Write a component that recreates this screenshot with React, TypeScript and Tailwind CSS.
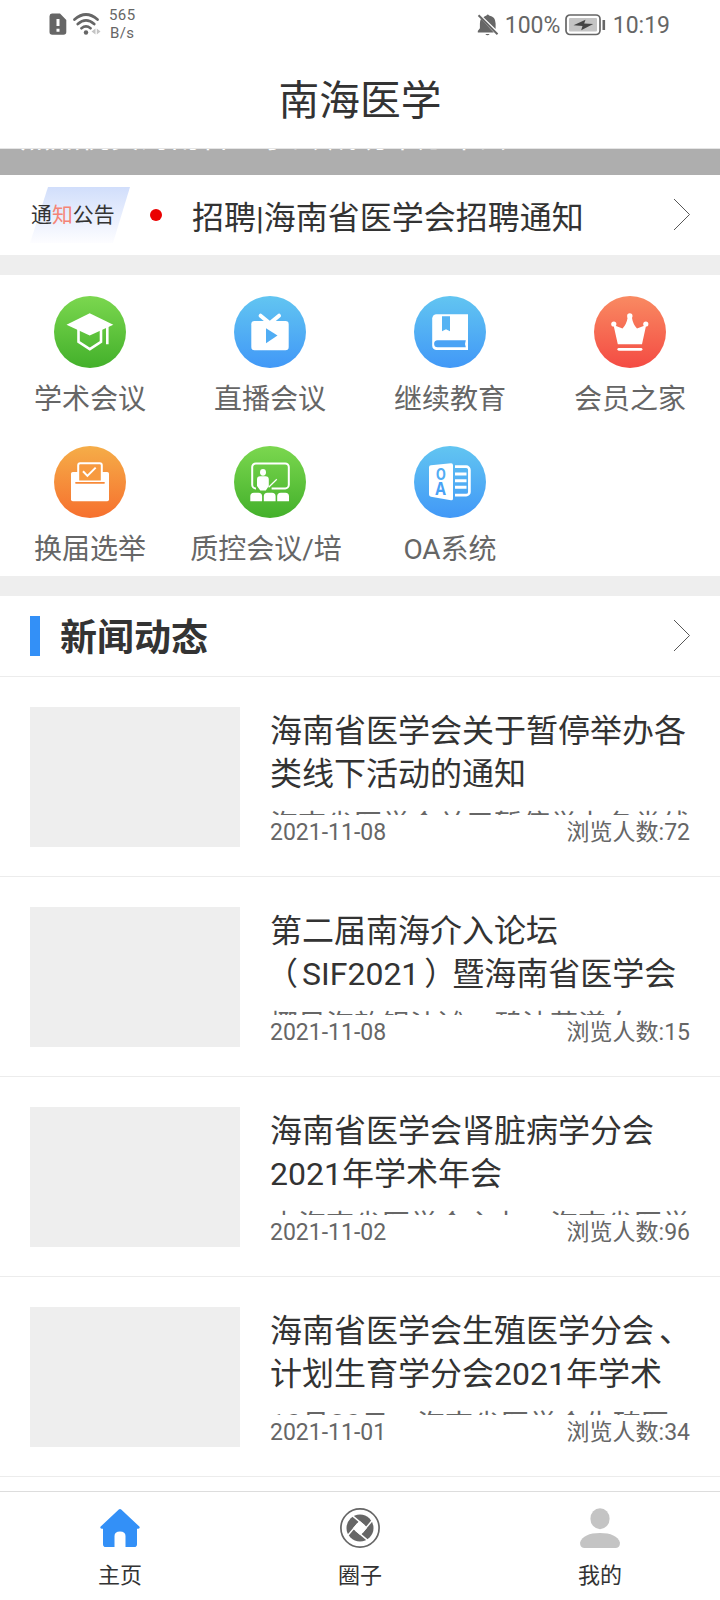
import type { ReactNode } from "react";

const Chevron = () => (
  <svg className="h-8 w-[18px]" viewBox="0 0 18 32" fill="none" stroke="#444" strokeWidth="0.9">
    <path d="M1 0 16.500 15.500 1 31" />
  </svg>
);

const gradients: Record<string, [string, string]> = {
  green: ["#7bd74f", "#43b02b"],
  blue: ["#62c5f1", "#4198f7"],
  red: ["#f98a62", "#f44b43"],
  orange: ["#f5ad48", "#f6702e"],
};

function Badge({ id, tone, children }: { id: string; tone: string; children: ReactNode }) {
  const [from, to] = gradients[tone];
  return (
    <svg className="h-[72px] w-[72px]" viewBox="0 0 72 72" fill="none">
      <defs>
        <linearGradient id={id} x1="0" y1="0" x2="0" y2="1">
          <stop stopColor={from} />
          <stop offset="1" stopColor={to} />
        </linearGradient>
      </defs>
      <circle cx="36" cy="36" r="36" fill={`url(#${id})`} />
      {children}
    </svg>
  );
}

const menu = [
  {
    label: "学术会议",
    tone: "green",
    art: (
      <>
        <path d="M12.5 28.7 35.7 17.3 59.3 28.7 35.7 39.5Z" fill="#fff" />
        <path d="M24.5 33v12.9l11.3 7.2 11.2-7.2V33M53.3 30v18.3" stroke="#fff" strokeWidth="2.6" />
      </>
    ),
  },
  {
    label: "直播会议",
    tone: "blue",
    art: (
      <>
        <rect x="17.3" y="25" width="37.4" height="29.2" rx="3.2" fill="#fff" />
        <path d="m26.6 19.7 9.2 7.6 9.2-7.6" stroke="#fff" strokeWidth="4" strokeLinecap="round" />
        <path d="M32 32.3v15l11.5-7.8Z" fill="#50adf4" />
      </>
    ),
  },
  {
    label: "继续教育",
    tone: "blue",
    art: (
      <>
        <path d="M22.5 18.3H54V54H22.5a4.3 4.3 0 0 1-4.3-4.3V22.6a4.3 4.3 0 0 1 4.3-4.3Z" fill="#fff" />
        <path d="M28 20.3h8v15l-4-2-4 2Z" fill="#56b3f3" />
        <path d="M23.6 44.3h28.2q-1.5 3.6 0 7H23.6a3.5 3.5 0 0 1 0-7Z" fill="#4aa3f5" />
      </>
    ),
  },
  {
    label: "会员之家",
    tone: "red",
    art: (
      <>
        <path d="m19.500 29 4.300 19.200H48L52.200 29 43 32.500q-4-4-5.200-11.500h-4q-1.300 7.500-5.300 11.500Z" fill="#fff" />
        <circle cx="19.8" cy="28" r="2.6" fill="#fff" />
        <circle cx="35.8" cy="20" r="2.7" fill="#fff" />
        <circle cx="51.8" cy="28" r="2.6" fill="#fff" />
        <path d="M24.8 53.3H47" stroke="#fff" strokeWidth="2.8" strokeLinecap="round" />
      </>
    ),
  },
  {
    label: "换届选举",
    tone: "orange",
    art: (
      <>
        <rect x="17" y="26" width="38" height="29.3" rx="1.8" fill="#fff" />
        <path d="M24.2 35.5V19.2a2 2 0 0 1 2-2h19.6a2 2 0 0 1 2 2v16.3Z" fill="#f79a40" stroke="#fff" strokeWidth="2" />
        <path d="M22 36.8h28" stroke="#f88a38" strokeWidth="1.8" strokeLinecap="round" />
        <path d="m29 25.3 4.4 4.6 8.3-8.3" stroke="#fff" strokeWidth="2" />
      </>
    ),
  },
  {
    label: "质控会议/培",
    tone: "green",
    art: (
      <>
        <path
          d="M22 42.4h-.2a3.6 3.6 0 0 1-3.6-3.6V21a3.6 3.6 0 0 1 3.6-3.6h29.4a3.6 3.6 0 0 1 3.6 3.6v17.8a3.6 3.6 0 0 1-3.6 3.6H37.6"
          stroke="#fff"
          strokeWidth="2"
        />
        <ellipse cx="29" cy="26.3" rx="3" ry="3.4" fill="#fff" />
        <path d="M26.5 30.2h5a3.3 3.3 0 0 1 3.3 3.3V40l-3 4.500h-5.500L23 40v-6.500a3.3 3.3 0 0 1 3.500-3.300Z" fill="#fff" />
        <path d="m42.8 33.2-8.2 8" stroke="#fff" strokeWidth="1.2" />
        <path
          d="M16.3 55.3v-5a3.6 3.6 0 0 1 3.6-3.6h4.6a3.6 3.6 0 0 1 3.6 3.6v5ZM29.8 55.3v-5a3.6 3.6 0 0 1 3.6-3.6H38a3.6 3.6 0 0 1 3.6 3.6v5ZM43.2 55.3v-5a3.6 3.6 0 0 1 3.6-3.6h4.6a3.6 3.6 0 0 1 3.6 3.6v5Z"
          fill="#fff"
        />
      </>
    ),
  },
  {
    label: "OA系统",
    tone: "blue",
    art: (
      <>
        <path d="m17 19.3 20-2q2-.1 2 1.9v33.3q0 2.2-2 1.8l-20-3.600q-2-.4-2-2.300V21.300q0-1.800 2-2Z" fill="#fff" />
        <text
          transform="translate(26.800 34.400) scale(.8 1)"
          textAnchor="middle"
          fontSize="16"
          fontWeight="700"
          fill="#51acf4"
          className="font-['Open_Sans',sans-serif]"
        >
          O
        </text>
        <text
          transform="translate(26.500 49.300) scale(.85 1)"
          textAnchor="middle"
          fontSize="18"
          fontWeight="700"
          fill="#48a1f6"
          className="font-['Open_Sans',sans-serif]"
        >
          A
        </text>
        <path d="M41 20.700h11.200a3.200 3.200 0 0 1 3.200 3.200v22a3.200 3.200 0 0 1-3.200 3.200H41" stroke="#fff" strokeWidth="2.700" />
        <path d="M41 28h11.500M41 34.700h11.500M41 41.300h11.500" stroke="#fff" strokeWidth="2.900" />
      </>
    ),
  },
];

const news: { title: [ReactNode, ReactNode]; summary: ReactNode; date: string; views: number }[] = [
  {
    title: ["海南省医学会关于暂停举办各", "类线下活动的通知"],
    summary: "海南省医学会关于暂停举办各类线",
    date: "2021-11-08",
    views: 72,
  },
  {
    title: [
      "第二届南海介入论坛",
      <>
        <span className="relative -left-[4px]">（</span>SIF2021<span className="relative left-[5px]">）</span>
        <span className="ml-px">暨海南省医学会</span>
      </>,
    ],
    summary: "椰风海韵银沙滩，碧波荡漾白",
    date: "2021-11-08",
    views: 15,
  },
  {
    title: ["海南省医学会肾脏病学分会", "2021年学术年会"],
    summary: "由海南省医学会主办，海南省医学",
    date: "2021-11-02",
    views: 96,
  },
  {
    title: [
      <>
        海南省医学会生殖医学分会<span className="relative left-[5px]">、</span>
      </>,
      "计划生育学分会2021年学术",
    ],
    summary: (
      <>
        <span className="relative -top-px">10</span>月<span className="relative -top-px">30</span>日，海南省医学会生殖医
      </>
    ),
    date: "2021-11-01",
    views: 34,
  },
];

function StatusBar() {
  return (
    <div className="flex h-12 items-center justify-between pr-[50px] pl-[49px] text-[23px] text-[#666]">
      <div className="flex items-center">
        <svg className="h-[22px] w-[18px]" viewBox="0 0 18 22">
          <path d="M3 .5h8L17.300 7v12a2.800 2.800 0 0 1-2.800 2.800H3.300A2.800 2.800 0 0 1 .5 19V3.300A2.800 2.800 0 0 1 3 .5Z" fill="#666" />
          <path d="M9 6v7M9 15.800v3" stroke="#fff" strokeWidth="3" />
        </svg>
        <svg className="ml-[6px] h-6 w-7" viewBox="0 0 28 24" fill="none" stroke="#666" strokeWidth="2.700" strokeLinecap="round">
          <path d="M1.500 7.500q11.500-10 23 0M4.800 12q8.200-7.200 16.400 0M8.500 16.200q4.500-3.600 9 0" />
          <circle cx="13" cy="20.500" r="2.200" fill="#666" stroke="none" />
          <path d="M22.500 16.500v6l-4-3ZM23.800 16.500v6l3.700-3Z" fill="#c4c4c4" stroke="none" />
        </svg>
        <div className="ml-2 flex flex-col items-center text-[15px] leading-[18px] tracking-[0.4px]">
          <span>565</span>
          <span>B/s</span>
        </div>
      </div>
      <div className="mt-[2px] flex items-center">
        <svg className="h-[22px] w-[22px]" viewBox="0 0 22 22" fill="none">
          <path
            d="M7 2.800Q8.500 1.700 9.500 1.400q1.200-2 2.600 0 6.500 1.200 6.500 8v5.500L6.500 3.200ZM4 4.800 16.800 18.600H.8v-1.500L2.900 14.300V9.500q0-2.500 1.100-4.700ZM8.300 20h4.400q-2.200 2.500-4.400 0Z"
            fill="#666"
          />
          <path d="m1.500 1.300 19 19" stroke="#666" strokeWidth="2" />
        </svg>
        <span className="ml-[6px] w-[56px] pt-[2px] leading-6">100%</span>
        <svg className="ml-[4px] h-[22px] w-[42px]" viewBox="0 0 42 22" fill="none">
          <rect x="1" y="1" width="34" height="19.500" rx="4" stroke="#666" strokeWidth="1.700" />
          <rect x="4" y="4" width="28" height="13.500" rx="1" fill="#c4c4c4" />
          <path d="m8.500 11.200 12-5.500-1.300 3.800 9 .6-12 6.100 1.300-4.200Z" fill="#444" />
          <path d="M38.800 6v10" stroke="#666" strokeWidth="2.600" />
        </svg>
        <span className="ml-[6px] pt-[2px] leading-6">10:19</span>
      </div>
    </div>
  );
}

const HomeIcon = () => (
  <svg className="h-10 w-10" viewBox="0 0 40 40">
    <path
      d="M18.800 1.500q1.200-1 2.400 0L39.300 18.500q1.200 1.700-1 2.200H37v15.500q0 2.800-2.800 2.800h-8.700V28q0-4.500-5.500-4.500T14.500 28v11H5.800Q3 39 3 36.200V20.700H1.700q-2.200-.5-1-2.200Z"
      fill="#3390f7"
    />
  </svg>
);

const blades = [0, 90, 180, 270];
const CircleIcon = () => (
  <svg className="h-10 w-10" viewBox="0 0 40 40" fill="none">
    <circle cx="20" cy="20" r="19.100" stroke="#666" strokeWidth="1.700" />
    <circle cx="20" cy="20" r="13.500" fill="#666" />
    <g transform="rotate(40 20 20)">
      <rect x="14.800" y="14.800" width="10.400" height="10.400" rx="1" fill="#fff" />
      {blades.map((angle) => (
        <path key={angle} d="M24.500 22V5" transform={`rotate(${angle} 20 20)`} stroke="#fff" strokeWidth="1.500" />
      ))}
    </g>
  </svg>
);

const PersonIcon = () => (
  <svg className="h-10 w-10" viewBox="0 0 40 40" fill="#c4c4c4">
    <ellipse cx="20" cy="10.700" rx="9.600" ry="10.500" />
    <path d="M4 40q-4-.5-4-5.500Q3.500 25 20 25t20 9.500q0 5-4 5.500Z" />
  </svg>
);

const tabs = [
  { label: "主页", icon: <HomeIcon /> },
  { label: "圈子", icon: <CircleIcon /> },
  { label: "我的", icon: <PersonIcon /> },
];

export default function App() {
  return (
    <div className="flex h-[1600px] w-[720px] flex-col overflow-hidden bg-white font-[Roboto,'Noto_Sans_CJK_SC',sans-serif] text-[#333]">
      <StatusBar />
      <h1 className="flex h-[101px] items-center justify-center border-b border-[#e5e5e5] pt-[7px] text-[40.700px] leading-none">
        南海医学
      </h1>
      <div className="h-[26px] overflow-hidden bg-[#aeaeae] pl-5">
        <p className="-mt-[27px] text-[30px] leading-[30px] whitespace-nowrap text-white">热烈祝贺海南省医学会 成功举办年会</p>
      </div>

      <div className="flex h-20 items-center pr-[29px] pl-[30px]">
        <div className="relative flex h-14 w-[100px] items-center">
          <svg className="absolute inset-0 h-14 w-[100px]" viewBox="0 0 100 56">
            <defs>
              <linearGradient id="tag" x1="0" y1="0" x2="0" y2="1">
                <stop stopColor="#d1defb" />
                <stop offset="1" stopColor="#fdfdff" />
              </linearGradient>
            </defs>
            <path d="M18 0h82L83 56H0Z" fill="url(#tag)" />
          </svg>
          <span className="relative pl-px text-[20.900px] leading-none">
            通<span className="text-[#f58476]">知</span>公告
          </span>
        </div>
        <span className="ml-5 h-3 w-3 rounded-full bg-[#ea0000]" />
        <span className="ml-[30px] flex-1 pt-[5px] text-[32px] leading-10">招聘|海南省医学会招聘通知</span>
        <Chevron />
      </div>
      <div className="h-5 bg-[#eee]" />

      <div className="grid h-[301px] grid-cols-4 content-start pt-[21px]">
        {menu.map((m, i) => (
          <div key={m.label} className="flex h-[150px] flex-col items-center">
            <Badge id={`badge-${i}`} tone={m.tone}>
              {m.art}
            </Badge>
            <span className={`mt-3 text-[28px] leading-10 whitespace-nowrap text-[#666] ${m.label.length > 5 ? "-ml-2" : ""}`}>
              {m.label}
            </span>
          </div>
        ))}
      </div>
      <div className="h-5 bg-[#eee]" />

      <div className="flex h-20 items-center pr-[29px] pl-[30px]">
        <span className="h-10 w-[10px] bg-[#3390f7]" />
        <h2 className="ml-5 flex-1 pt-[5px] text-[37px] leading-10 font-bold">新闻动态</h2>
        <div className="-mt-px">
          <Chevron />
        </div>
      </div>

      <div className="h-[815px] overflow-hidden">
        {news.map((n, i) => (
          <article key={i} className="flex h-[200px] border-t border-[#ececec] px-[30px] pt-[30px]">
            <div className="h-[140px] w-[210px] shrink-0 bg-[#eee]" />
            <div className="ml-[30px] flex flex-1 flex-col pt-[3px]">
              <div className="h-[105px] overflow-hidden">
                <h3 className="text-[32px] leading-[42.500px] whitespace-nowrap">
                  {n.title[0]}
                  <br />
                  {n.title[1]}
                </h3>
                <p className="mt-[11px] text-[28px] leading-10 whitespace-nowrap text-[#666]">{n.summary}</p>
              </div>
              <div className="flex justify-between pt-px text-[23px] leading-[34px] text-[#666]">
                <span>{n.date}</span>
                <span>浏览人数:{n.views}</span>
              </div>
            </div>
          </article>
        ))}
        <div className="h-[15px] border-t border-[#ececec]" />
      </div>

      <nav className="grid h-[109px] grid-cols-3 border-t border-[#ddd] pt-4">
        {tabs.map((t) => (
          <div key={t.label} className="flex flex-col items-center">
            {t.icon}
            <span className="mt-3 text-[22px] leading-8">{t.label}</span>
          </div>
        ))}
      </nav>
    </div>
  );
}
